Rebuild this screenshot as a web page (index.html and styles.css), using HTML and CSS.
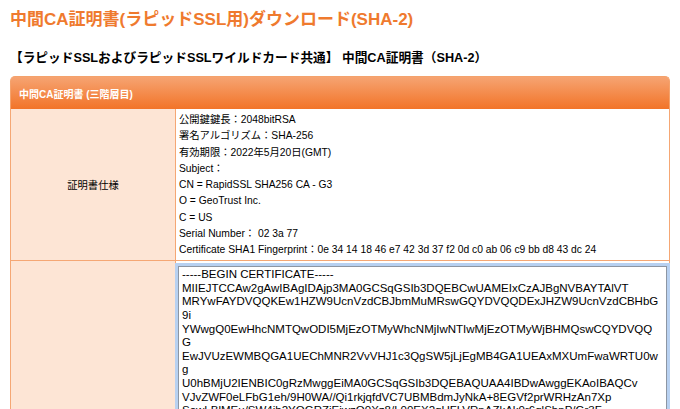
FILE: index.html
```html
<!DOCTYPE html>
<html lang="ja">
<head>
  <meta charset="UTF-8" />
  <title>中間CA証明書(ラピッドSSL用)ダウンロード(SHA-2)</title>
  <link rel="stylesheet" href="styles.css">
</head>
<body>
  <h1 class="pageTitle">中間CA証明書(ラピッドSSL用)ダウンロード(SHA-2)</h1>
  <h2 class="subTitle">【ラピッドSSLおよびラピッドSSLワイルドカード共通】 中間CA証明書（SHA-2）</h2>

  <table class="certTable">
    <thead>
      <tr><th colspan="2">中間CA証明書 (三階層目)</th></tr>
    </thead>
    <tbody>
      <tr>
        <td class="label">証明書仕様</td>
        <td class="spec">
          公開鍵鍵長：2048bitRSA<br>
          署名アルゴリズム：SHA-256<br>
          有効期限：2022年5月20日(GMT)<br>
          Subject：<br>
          CN = RapidSSL SHA256 CA - G3<br>
          O = GeoTrust Inc.<br>
          C = US<br>
          Serial Number： 02 3a 77<br>
          Certificate SHA1 Fingerprint：0e 34 14 18 46 e7 42 3d 37 f2 0d c0 ab 06 c9 bb d8 43 dc 24
        </td>
      </tr>
      <tr>
        <td class="label"></td>
        <td class="pem">
<textarea class="certText" rows="24" readonly>-----BEGIN CERTIFICATE-----
MIIEJTCCAw2gAwIBAgIDAjp3MA0GCSqGSIb3DQEBCwUAMEIxCzAJBgNVBAYTAlVT
MRYwFAYDVQQKEw1HZW9UcnVzdCBJbmMuMRswGQYDVQQDExJHZW9UcnVzdCBHbG9i
YWwgQ0EwHhcNMTQwODI5MjEzOTMyWhcNMjIwNTIwMjEzOTMyWjBHMQswCQYDVQQG
EwJVUzEWMBQGA1UEChMNR2VvVHJ1c3QgSW5jLjEgMB4GA1UEAxMXUmFwaWRTU0wg
U0hBMjU2IENBIC0gRzMwggEiMA0GCSqGSIb3DQEBAQUAA4IBDwAwggEKAoIBAQCv
VJvZWF0eLFbG1eh/9H0WA//Qi1rkjqfdVC7UBMBdmJyNkA+8EGVf2prWRHzAn7Xp
SowLBlMEu/SW4ib2YQGRZjEiwzQ0Xz8/L00EX2qUFLVRnAZkAk0r6qlShnP/Gr3F
-----END CERTIFICATE-----</textarea>
        </td>
      </tr>
    </tbody>
  </table>
</body>
</html>
```

FILE: styles.css
```css
body {
  margin: 0;
  padding: 0 10px;
  background: #fff;
  color: #000;
  font-family: "Liberation Sans", "Noto Sans CJK JP", sans-serif;
}
.pageTitle {
  margin: 0;
  padding-top: 8px;
  font-size: 17px;
  line-height: 24px;
  color: #ef7a2e;
}
.subTitle {
  margin: 18px 0 0;
  font-size: 12.7px;
  line-height: 16px;
}
.certTable {
  margin-top: 10px;
  width: 660px;
  border-collapse: separate;
  border-spacing: 0;
  font-size: 10.3px;
}
.certTable th {
  height: 32px;
  padding: 0 8px;
  text-align: left;
  color: #fff;
  font-size: 10px;
  background: linear-gradient(#f6a472, #f27428);
  border-radius: 5px 5px 0 0;
  border: 1px solid #f4a26c;
  border-bottom: none;
}
.certTable td {
  border-bottom: 1px solid #f5a774;
  border-right: 1px solid #f5a774;
}
.certTable td.label {
  width: 164px;
  text-align: center;
  vertical-align: middle;
  background: #fde5d5;
  border-left: 1px solid #f5a774;
}
.certTable td.spec {
  padding: 3px 3px 2px;
  line-height: 16.25px;
  background: #fff;
}
.certTable td.pem {
  padding: 5px 2px 0 2px;
  background: #fff;
}
.certText {
  display: block;
  width: 489px;
  box-sizing: border-box;
  margin: 0;
  padding: 1px 6px 1px 3px;
  border: 1px solid #8d96a3;
  box-shadow: 0 0 0 3px #b8d1f1;
  font-family: "Liberation Sans", sans-serif;
  font-size: 11.5px;
  line-height: 13.6px;
  color: #000;
  resize: none;
  outline: none;
}
```
